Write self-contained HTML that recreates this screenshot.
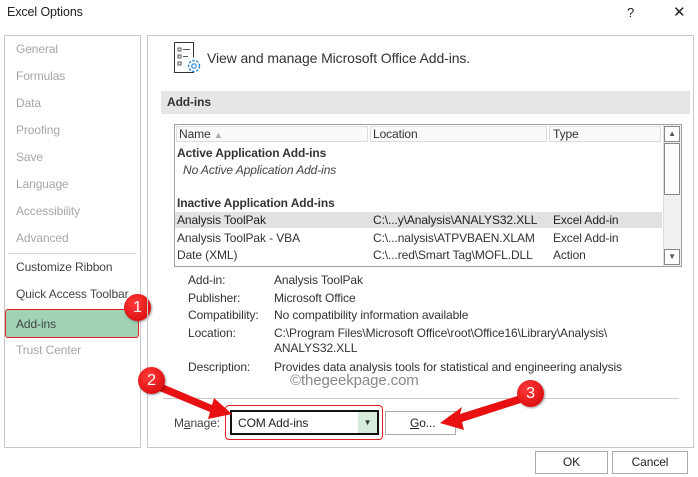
<!DOCTYPE html>
<html><head><meta charset="utf-8"><style>
*{margin:0;padding:0;box-sizing:border-box}
body{width:698px;height:477px;background:#fff;position:relative;overflow:hidden;font-family:"Liberation Sans",sans-serif;font-size:12px;color:#333;letter-spacing:-0.1px}
.a{position:absolute;white-space:nowrap}
.nav{left:16px;color:#a6a6a6}
.nd{color:#444}
.b{font-weight:bold}
.c{position:absolute;width:27px;height:27px;border-radius:50%;background:radial-gradient(circle at 40% 35%,#ff3b3b,#d00000);color:#fff;font-size:16px;text-align:center;line-height:27px;box-shadow:1px 1px 2px rgba(0,0,0,.4)}
</style></head><body>
<div class="a" style="left:7px;top:5px;font-size:12.5px;color:#222">Excel Options</div>
<div class="a" style="left:627px;top:5px;font-size:13px;color:#222">?</div>
<div class="a" style="left:673px;top:3px;font-size:15px;color:#222">✕</div>

<div class="a" style="left:4px;top:35px;width:137px;height:413px;border:1px solid #c8c8c8"></div>
<div class="a nav" style="top:42px">General</div>
<div class="a nav" style="top:69px">Formulas</div>
<div class="a nav" style="top:96px">Data</div>
<div class="a nav" style="top:123px">Proofing</div>
<div class="a nav" style="top:150px">Save</div>
<div class="a nav" style="top:177px">Language</div>
<div class="a nav" style="top:204px">Accessibility</div>
<div class="a nav" style="top:231px">Advanced</div>
<div class="a" style="left:8px;top:253px;width:129px;height:1px;background:#d8d8d8"></div>
<div class="a nav nd" style="top:260px">Customize Ribbon</div>
<div class="a nav nd" style="top:287px">Quick Access Toolbar</div>
<div class="a" style="left:5px;top:309px;width:134px;height:29px;background:#9fd3b4;border:1.5px solid #e02020;border-radius:3px"></div>
<div class="a nav nd" style="top:317px">Add-ins</div>
<div class="a nav" style="top:343px">Trust Center</div>
<div class="c" style="left:124px;top:294px">1</div>

<div class="a" style="left:147px;top:35px;width:547px;height:413px;border:1px solid #c8c8c8"></div>
<svg class="a" style="left:172px;top:42px" width="32" height="34" viewBox="0 0 32 34">
<path d="M2.5 .5h19v15M21.5 22v8.5h-19v-30" fill="none" stroke="#333"/>
<rect x="6" y="6" width="3" height="3" fill="none" stroke="#555"/><rect x="6" y="13" width="3" height="3" fill="none" stroke="#555"/><rect x="6" y="20" width="3" height="3" fill="none" stroke="#555"/>
<path d="M11 7.5h7M11 14.5h5" stroke="#555"/>
<circle cx="22" cy="24" r="5.5" fill="#fff" stroke="#2a8ad4" stroke-width="1.4" stroke-dasharray="2.5 1.5"/>
<circle cx="22" cy="24" r="2.2" fill="none" stroke="#2a8ad4" stroke-width="1.2"/>
</svg>
<div class="a" style="left:207px;top:50px;font-size:14px;color:#333">View and manage Microsoft Office Add-ins.</div>
<div class="a" style="left:161px;top:91px;width:529px;height:23px;background:#e6e6e6"></div>
<div class="a b" style="left:167px;top:95px;color:#333">Add-ins</div>

<div class="a" style="left:174px;top:124px;width:508px;height:143px;border:1px solid #a0a0a0;overflow:hidden">
<div class="a" style="left:2px;top:140px;color:#333">Data Streamer Tools</div><div class="a" style="left:198px;top:140px">C:\...dll\...\DUSDS.DLL</div><div class="a" style="left:378px;top:140px">Excel Add-in</div>
</div>
<div class="a" style="left:176px;top:126px;width:192px;height:16px;border:1px solid #ddd;background:#fafafa"></div>
<div class="a" style="left:370px;top:126px;width:177px;height:16px;border:1px solid #ddd;background:#fafafa"></div>
<div class="a" style="left:549px;top:126px;width:112px;height:16px;border:1px solid #ddd;background:#fafafa"></div>
<div class="a" style="left:179px;top:127px">Name <span style="color:#aaa;font-size:9px">▲</span></div>
<div class="a" style="left:373px;top:127px">Location</div>
<div class="a" style="left:553px;top:127px">Type</div>
<div class="a" style="left:663px;top:125px;width:18px;height:141px;background:#f0f0f0;border-left:1px solid #ddd"></div>
<div class="a" style="left:664px;top:126px;width:16px;height:16px;border:1px solid #888;background:#fff;font-size:8px;text-align:center;line-height:14px;color:#555">▲</div>
<div class="a" style="left:664px;top:143px;width:16px;height:52px;border:1px solid #888;background:#fff"></div>
<div class="a" style="left:664px;top:249px;width:16px;height:16px;border:1px solid #888;background:#fff;font-size:8px;text-align:center;line-height:14px;color:#555">▼</div>
<div class="a b" style="left:177px;top:146px">Active Application Add-ins</div>
<div class="a" style="left:183px;top:163px;font-style:italic;color:#444">No Active Application Add-ins</div>
<div class="a b" style="left:177px;top:196px">Inactive Application Add-ins</div>
<div class="a" style="left:175px;top:212px;width:487px;height:16px;background:#e1e1e4"></div>
<div class="a" style="left:177px;top:213px;color:#222">Analysis ToolPak</div><div class="a" style="left:373px;top:213px;color:#222">C:\...y\Analysis\ANALYS32.XLL</div><div class="a" style="left:553px;top:213px;color:#222">Excel Add-in</div>
<div class="a" style="left:177px;top:231px">Analysis ToolPak - VBA</div><div class="a" style="left:373px;top:231px">C:\...nalysis\ATPVBAEN.XLAM</div><div class="a" style="left:553px;top:231px">Excel Add-in</div>
<div class="a" style="left:177px;top:248px">Date (XML)</div><div class="a" style="left:373px;top:248px">C:\...red\Smart Tag\MOFL.DLL</div><div class="a" style="left:553px;top:248px">Action</div>

<div class="a" style="left:188px;top:273px">Add-in:</div><div class="a" style="left:274px;top:273px">Analysis ToolPak</div>
<div class="a" style="left:188px;top:291px">Publisher:</div><div class="a" style="left:274px;top:291px">Microsoft Office</div>
<div class="a" style="left:188px;top:308px">Compatibility:</div><div class="a" style="left:274px;top:308px">No compatibility information available</div>
<div class="a" style="left:188px;top:326px">Location:</div><div class="a" style="left:274px;top:326px">C:\Program Files\Microsoft Office\root\Office16\Library\Analysis\</div>
<div class="a" style="left:274px;top:341px">ANALYS32.XLL</div>
<div class="a" style="left:188px;top:360px">Description:</div><div class="a" style="left:274px;top:360px">Provides data analysis tools for statistical and engineering analysis</div>
<div class="a" style="left:290px;top:372px;font-size:15px;color:#888">©thegeekpage.com</div>
<div class="a" style="left:163px;top:398px;width:516px;height:1px;background:#ccc"></div>

<div class="a" style="left:174px;top:416px;color:#444">M<u>a</u>nage:</div>
<div class="a" style="left:225px;top:405px;width:158px;height:35px;border:1.5px solid #e02020;border-radius:4px"></div>
<div class="a" style="left:230px;top:410px;width:149px;height:25px;border:2px solid #111;background:#fff"></div>
<div class="a" style="left:238px;top:416px;color:#222">COM Add-ins</div>
<div class="a" style="left:358px;top:412px;width:19px;height:21px;background:#d8ecde;font-size:8px;text-align:center;line-height:21px;color:#333">▼</div>
<div class="a" style="left:385px;top:411px;width:71px;height:24px;border:1px solid #aaa;background:#fff"></div>
<div class="a" style="left:410px;top:416px;color:#222"><u>G</u>o...</div>

<svg class="a" style="left:0;top:0" width="698" height="477">
<polygon points="160,383 212,405 214,398 232,414 208,419 210,412 157,390" fill="#e81010"/>
<polygon points="527,393 460,414 462,407 440,423 464,430 462,422 530,400" fill="#e81010"/>
</svg>
<div class="c" style="left:138px;top:367px">2</div>
<div class="c" style="left:517px;top:380px">3</div>

<div class="a" style="left:535px;top:451px;width:73px;height:23px;border:1px solid #aaa;background:#fff;text-align:center;line-height:21px;color:#222">OK</div>
<div class="a" style="left:612px;top:451px;width:76px;height:23px;border:1px solid #aaa;background:#fff;text-align:center;line-height:21px;color:#222">Cancel</div>
</body></html>
